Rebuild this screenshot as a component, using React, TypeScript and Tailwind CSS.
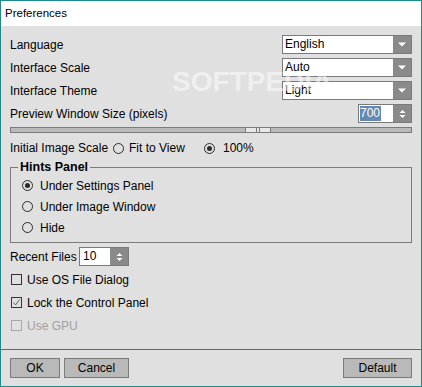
import React from 'react';

const ComboArrow = () => (
  <div className="flex w-[18px] items-center justify-center bg-[#8a8a8a]">
    <svg width="8" height="5" viewBox="0 0 8 5">
      <path d="M0 0.5h8L4 4.5z" fill="#fff" />
    </svg>
  </div>
);

const SpinArrows = () => (
  <div className="flex w-[18px] items-center justify-center bg-[#8a8a8a]">
    <svg width="7" height="10" viewBox="0 0 7 10">
      <path d="M0.5 4L3.5 1L6.5 4z" fill="#fff" />
      <path d="M0.5 6L3.5 9L6.5 6z" fill="#fff" />
    </svg>
  </div>
);

const Combo: React.FC<{ value: string }> = ({ value }) => (
  <div className="flex h-[19px] w-[130px] border border-[#7a7a7a] bg-white">
    <div className="flex-1 pl-[2px] leading-[17px] text-black">{value}</div>
    <ComboArrow />
  </div>
);

const Radio: React.FC<{ checked?: boolean }> = ({ checked }) => (
  <svg width="11" height="11" viewBox="0 0 11 11" className="shrink-0">
    <circle cx="5.5" cy="5.5" r="5" fill="none" stroke="#2a2a2a" strokeWidth="1" />
    {checked && <circle cx="5.5" cy="5.5" r="2.5" fill="#2a2a2a" />}
  </svg>
);

const Check: React.FC<{ checked?: boolean; disabled?: boolean }> = ({ checked, disabled }) => (
  <div
    className={
      disabled
        ? 'flex h-[11px] w-[11px] shrink-0 items-center justify-center border border-[#a8a8a8]'
        : 'flex h-[11px] w-[11px] shrink-0 items-center justify-center border border-[#333333]'
    }
  >
    {checked && (
      <svg width="9" height="9" viewBox="0 0 9 9">
        <path d="M1.5 4.5L3.5 7L7.5 1.5" fill="none" stroke="#666" strokeWidth="1" />
      </svg>
    )}
  </div>
);

export default function App() {
  return (
    <div className="relative flex h-[387px] w-[422px] flex-col border border-[#1b8c8c] bg-[#e0e0e0] font-['Liberation_Sans',Arial,sans-serif] text-[12px] text-black">
      {/* Title bar */}
      <div className="flex h-[25px] items-center bg-white pl-[4px] text-[11.5px]">Preferences</div>

      {/* Settings */}
      <div className="flex flex-col px-[9px] pt-[9px]">
        <div className="flex h-[19px] items-center justify-between">
          <span>Language</span>
          <Combo value="English" />
        </div>
        <div className="mt-[4px] flex h-[19px] items-center justify-between">
          <span>Interface Scale</span>
          <Combo value="Auto" />
        </div>
        <div className="mt-[4px] flex h-[19px] items-center justify-between">
          <span>Interface Theme</span>
          <Combo value="Light" />
        </div>
        <div className="mt-[4px] flex h-[19px] items-center justify-between">
          <span>Preview Window Size (pixels)</span>
          <div className="flex h-[19px] w-[54px] border border-[#7a7a7a] bg-white">
            <div className="flex flex-1 items-center pl-[1px]">
              <span className="bg-[#6489b5] pr-[1px] leading-[15px] text-white">700</span>
            </div>
            <SpinArrows />
          </div>
        </div>

        {/* Slider */}
        <div className="relative mt-[4px] h-[6px] border border-[#7a7a7a] bg-[#bababa]">
          <div className="absolute left-[234px] top-[-1px] flex h-[6px] w-[26px] items-center justify-center gap-[2px] border border-[#7a7a7a] bg-[#e8e8e8]">
            <div className="h-full w-px bg-[#7a7a7a]" />
            <div className="h-full w-px bg-[#7a7a7a]" />
          </div>
        </div>

        <div className="mt-[5px] flex h-[20px] items-center">
          <span className="w-[103px]">Initial Image Scale</span>
          <Radio />
          <span className="ml-[5px] w-[75px]">Fit to View</span>
          <Radio checked />
          <span className="ml-[8px]">100%</span>
        </div>

        {/* Hints panel group */}
        <fieldset className="mt-[1px] border border-[#7a7a7a] pb-[4px]">
          <legend className="ml-[7px] px-[2px] text-[12.5px] font-bold leading-[16px]">Hints Panel</legend>
          <div className="flex flex-col pl-[11px]">
            <div className="flex h-[21px] items-center gap-[7px]">
              <Radio checked />
              <span>Under Settings Panel</span>
            </div>
            <div className="flex h-[21px] items-center gap-[7px]">
              <Radio />
              <span>Under Image Window</span>
            </div>
            <div className="flex h-[21px] items-center gap-[7px]">
              <Radio />
              <span>Hide</span>
            </div>
          </div>
        </fieldset>

        <div className="mt-[4px] flex h-[19px] items-center">
          <span className="w-[69px]">Recent Files</span>
          <div className="flex h-[19px] w-[50px] border border-[#7a7a7a] bg-white">
            <div className="flex-1 pl-[3px] leading-[17px]">10</div>
            <SpinArrows />
          </div>
        </div>

        <div className="mt-[2px] flex h-[23px] items-center gap-[5px] pl-px">
          <Check />
          <span>Use OS File Dialog</span>
        </div>
        <div className="flex h-[23px] items-center gap-[5px] pl-px">
          <Check checked />
          <span>Lock the Control Panel</span>
        </div>
        <div className="flex h-[23px] items-center gap-[5px] pl-px">
          <Check disabled />
          <span className="text-[#a0a0a0]">Use GPU</span>
        </div>
      </div>

      {/* Footer */}
      <div className="mt-auto border-t border-[#666666] px-[9px] pb-[8px] pt-[8px]">
        <div className="flex h-[20px] items-stretch">
          <button className="w-[50px] border border-[#7a7a7a] bg-[#b9b9b9] text-[12px]">OK</button>
          <button className="ml-[4px] w-[65px] border border-[#7a7a7a] bg-[#b9b9b9] text-[12px]">Cancel</button>
          <button className="ml-auto w-[69px] border border-[#7a7a7a] bg-[#b9b9b9] text-[12px]">Default</button>
        </div>
      </div>

      {/* Watermark */}
      <div className="pointer-events-none absolute left-[171px] top-[67px] select-none text-[28px] font-bold leading-none text-white/50">
        SOFTPEDIA<span className="align-top text-[9px]">®</span>
      </div>
    </div>
  );
}
